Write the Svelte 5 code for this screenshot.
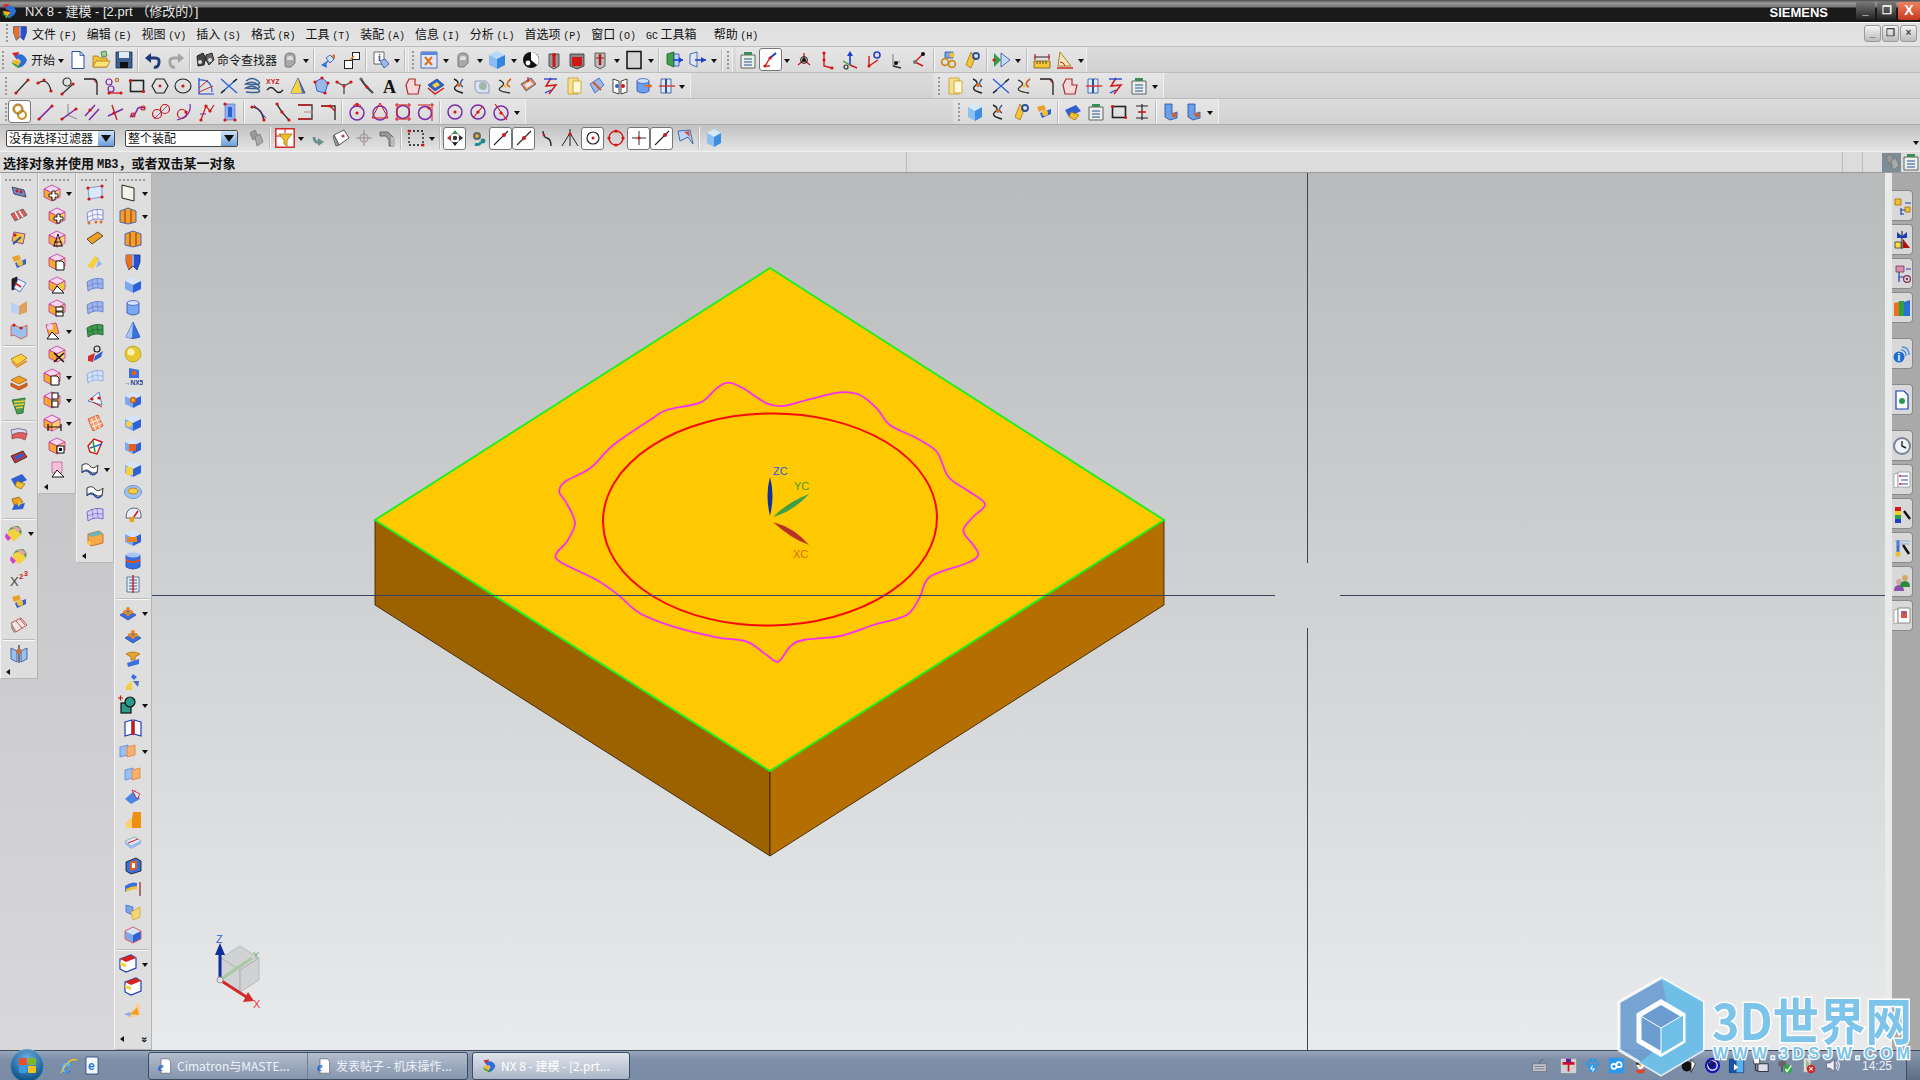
<script>
	const line = (d, s = "#333", w = 1.3) => `<path d="${d}" fill="none" stroke="${s}" stroke-width="${w}"/>`;
	const dot = (x, y, r = 1.6, c = "#d41414") => `<circle cx="${x}" cy="${y}" r="${r}" fill="${c}"/>`;
	const fill = (d, f, s = "none", w = 0.8) => `<path d="${d}" fill="${f}" stroke="${s}" stroke-width="${w}"/>`;
	const ring = (x, y, r, s = "#333", w = 1.2) => `<circle cx="${x}" cy="${y}" r="${r}" fill="none" stroke="${s}" stroke-width="${w}"/>`;
	const cube = (t, l, r, s = "none") =>
		fill("M10 2L18 6L10 10L2 6Z", t, s) + fill("M2 6L10 10V18L2 14Z", l, s) + fill("M18 6L10 10V18L18 14Z", r, s);
	const blue = () => cube("#d5e4fb", "#7ea8ee", "#2d62d8");
	const pink = (g = "") => cube("#f6d7f0", "#f5a92e", "#ffd070", "#c030a0") + g;
	const surf = (f, s) =>
		fill("M2 7Q9 2 18 4L18 14Q10 11 3 16Z", f, s) + line("M7 4.5L8 13M12 3.5L13 12M2.5 11Q10 7 18 9", s, 0.6);
	const cyl = (f, top) => fill("M4 5V15Q10 19 16 15V5Z", f, "#2a4fb0") + `<ellipse cx="10" cy="5" rx="6" ry="2.4" fill="${top}" stroke="#2a4fb0" stroke-width=".7"/>`;
	const purple = "#7a2aa8";
	const ghost = fill("M5 16V7Q5 3 10 3T15 7V13L11 17H6Z", "#a9a9a9", "#666") + fill("M7 7Q10 5 13 7V10H7Z", "#ddd");
	const tri = fill("M10 11L17 18H5Z", "#fff", "#111", 1);

	const ICONS = {
		nx: fill("M3 3L10 2L8 10Z", "#e02020") + fill("M5 6Q14 1 18 10Q16 17 8 18L12 11Z", "#2a6ed8") + fill("M3 10L12 11L7 18Z", "#f0b820") + fill("M2 12Q6 18 12 17", "#30a030"),
		new: fill("M4 1.5H12L16 5.5V18.5H4Z", "#fff", "#2a4fa0", 1) + fill("M12 1.5V5.5H16Z", "#cfe0f8", "#2a4fa0"),
		open: fill("M2 6H7L9 8H16V17H2Z", "#f0c040", "#a87a10") + fill("M5 11H19L16 17H2Z", "#ffe27a", "#a87a10") + fill("M10 2L15 1L16 6L11 7Z", "#9bd08a", "#487a40"),
		save: fill("M2 2H18V18H2Z", "#3c5f8f", "#1c3158") + fill("M5 2H15V8H5Z", "#dfe8f4") + fill("M6 12H14V18H6Z", "#111"),
		undo: line("M5 8H12Q17 8 16 13T11 17", "#1d3b78", 3) + fill("M8 3V13L2 8Z", "#1d3b78"),
		redo: line("M15 8H8Q3 8 4 13T9 17", "#a5a5a5", 3) + fill("M12 3V13L18 8Z", "#a5a5a5"),
		binoc: fill("M2 6L8 3L11 8L9 15L3 16Z", "#444", "#111") + fill("M11 5L17 3L19 10L14 15L11 10Z", "#666", "#111") + dot(5, 12, 2, "#ddd") + dot(15, 10, 2, "#ddd"),
		gshape: ghost,
		arrows: line("M5 15L15 5", "#2a6ed8", 1.5) + fill("M11 7L16 4V9Z", "#e07b20") + fill("M2 15L7 12L8 18Z", "#2a6ed8") + fill("M7 8L11 5L15 9L11 13Z", "#cfe0f8", "#2a4fa0"),
		boxes: `<rect x="2.5" y="10.5" width="8" height="8" fill="#fff" stroke="#222"/><rect x="10.5" y="2.5" width="7" height="7" fill="#fff" stroke="#222"/>` + line("M8 10L12 6", "#e07b20", 1.6),
		infoq: fill("M3 2H13V14H3Z", "#fff", "#444") + `<text x="7" y="11" font-size="10" font-family="Liberation Serif" font-weight="700" fill="#2a4fa0">i</text>` + fill("M9 11L14 9L18 14L13 18Z", "#9db8e8", "#2a4fa0"),
		winx: fill("M2 2H18V18H2Z", "#dfe8f8", "#2a4fa0") + line("M6 7L13 15M13 7L6 15", "#e07020", 2) + fill("M2 2H18V5H2Z", "#5a88dc"),
		cubeb: fill("M10 1L18 5L10 9L2 5Z", "#b7d8fa") + fill("M2 5L10 9V19L2 15Z", "#8cbdf2") + fill("M18 5L10 9V19L18 15Z", "#2f86e0"),
		ball: dot(10, 10, 8, "#111") + fill("M10 2A8 8 0 0 1 16 15L10 10Z", "#fff") + dot(7, 13, 2.4, "#fff"),
		cylr: fill("M5 4H15V16L10 19L5 16Z", "#999", "#333") + line("M10 4V17", "#d01818", 3) + dot(10, 5, 2, "#d01818"),
		cylr2: fill("M3 4H17V16L10 19L3 16Z", "#888", "#333") + fill("M5 7H15V16H5Z", "#d01818"),
		cylr3: fill("M5 3H15V16L10 19L5 16Z", "#bbb", "#444") + line("M10 4V15", "#b01818", 2.4) + line("M6 8H14", "#b01818", 1),
		panel: fill("M3 1.5H17V18.5H3Z", "#d4d4d4", "#111", 1.5),
		mir: fill("M3 4L10 2V17L3 14Z", "#3fa04a", "#1d5a28") + fill("M10 4H15V16H10Z", "#bcd4f8", "#2a4fa0") + line("M9 10H19", "#1d3fd0", 1.6) + fill("M15 7L19 10L15 13Z", "#1d3fd0"),
		mir2: fill("M3 4L10 2V17L3 14Z", "#dfe8f8", "#2a4fa0") + line("M8 10H19", "#1d3fd0", 1.6) + fill("M14 7L19 10L14 13Z", "#1d3fd0"),
		list: fill("M3 5H17V18H3Z", "#e8f0e8", "#444") + fill("M6 2H14V5H6Z", "#3b8a5a") + line("M6 9H14M6 12H14M6 15H14", "#2a4fa0", 1),
		wcs: line("M4 16L9 8", "#d01818", 1.4) + line("M9 8L15 3", "#1d3fd0", 2) + line("M4 16H9", "#d01818", 1.4) + dot(4, 16) + dot(9, 8),
		wcs2: line("M10 10V3M10 10L4 15M10 10L16 15", "#d01818", 1.3) + dot(10, 10, 2, "#111") + ring(10, 10, 3.4, "#111", 1),
		wcs3: line("M7 3V16L15 18", "#d01818", 1.4) + dot(7, 3) + dot(15, 18) + dot(7, 10),
		wcs4: line("M10 15V3", "#1d3fd0", 1.6) + fill("M7 6L10 1L13 6Z", "#1d3fd0") + line("M10 15L17 18", "#d01818", 1.4) + line("M10 15L3 11", "#3b9a3b", 1.4) + ring(6, 17, 2),
		wcs5: line("M6 6V16L15 10", "#d01818", 1.4) + ring(14, 5, 3, "#1d3fd0", 1.6) + dot(6, 16),
		wcs6: line("M7 4V16M7 16L14 11", "#999", 1.4) + line("M7 16L15 18", "#333", 1.4) + dot(10, 13, 2, "#111"),
		wcs7: line("M6 12L14 4M6 12L14 16", "#d01818", 1.4) + dot(14, 4, 2, "#111") + dot(6, 12, 2, "#777"),
		link: fill("M6 2H14V8H6Z", "#7aa6e8", "#2a4fa0") + ring(6, 12, 3.4, "#c89020", 1.8) + ring(13, 14, 3.4, "#c89020", 1.8) + dot(13, 5, 2.5, "#f0c030"),
		keyr: fill("M9 2L13 8L9 18L4 15L7 7Z", "#f2c53a", "#a87a10") + ring(14, 6, 3, "#2a4fa0", 1.8),
		play: fill("M2 3V17L9 10Z", "#2ea043") + fill("M9 3L18 10L9 17Z", "#c8daf8", "#2a4fa0") + dot(2, 10, 1.6),
		ruler: fill("M2 11H18V18H2Z", "#f2c53a", "#7a5a10") + line("M5 11V14M8 11V14M11 11V14M14 11V14", "#333", 0.8) + line("M2 7H18", "#222", 1) + line("M3 4V10M17 4V10", "#d01818", 1.2),
		angle: fill("M5 2L16 16H3Z", "#f4e6c0", "#b0801c", 1) + line("M2 18H18", "#d01818", 1.4) + line("M5 12Q9 12 10 16", "#d01818", 1),

		rline: line("M4 17L16 4", "#333") + dot(4, 17) + dot(16, 4),
		rarc: line("M3 7Q13 1 16 15", "#333") + dot(3, 7) + dot(9, 4) + dot(16, 15),
		rtan: ring(9, 6, 4) + line("M4 18L15 8", "#333") + dot(4, 18) + dot(15, 8),
		rfil: line("M3 3H12Q16 3 16 8V19", "#222") + line("M12 3L16 8", "#d01818", 1),
		rspl: ring(5, 6, 3, purple) + ring(7, 13, 3, purple) + ring(13, 4, 1.6, "#c07020") + line("M5 17H17", "#d01818") + dot(5, 17) + dot(17, 17),
		rrect: `<rect x="3.5" y="4.5" width="13" height="11" fill="none" stroke="#222" stroke-width="1.6"/>` + dot(3.5, 4.5) + dot(16.5, 15.5),
		rhex: fill("M6 3H14L18 10L14 17H6L2 10Z", "none", "#222", 1.2) + dot(10, 10, 1.4),
		rell: `<ellipse cx="10" cy="10" rx="8" ry="7" fill="none" stroke="#222" stroke-width="1.1"/>` + dot(10, 10),
		rbez: line("M3 2V18H18", "#1d3fd0", 1.2) + line("M3 4Q16 3 16 16", "#3060d0", 1.2) + line("M3 12L12 4M3 16L17 10", "#d01818", 0.9),
		rcross: line("M2 3L18 17M2 17L18 3", "#3060d0", 1.3) + line("M14 6L18 3M2 17L6 14", "#222", 1.3),
		rcoil: line("M4 5Q10 0 16 5T4 8Q10 4 16 9T4 12Q10 8 16 13T4 16", "#3a6090", 1.6),
		rxyz: `<text x="1" y="8" font-size="7" font-weight="700" font-family="Liberation Sans" fill="#d01818">XYZ</text>` + line("M2 14Q6 9 10 14T18 14", "#222", 1.3),
		rcone: fill("M10 2L17 17H3Z", "#4878d8", "#24408a") + fill("M10 2L14 17H3Z", "#f5d240"),
		rball: fill("M4 6L11 2L17 7L14 17L6 15Z", "#9ab8e8", "#3060d0", 1) + dot(4, 6) + dot(17, 7) + dot(14, 17) + dot(11, 2),
		rwye: line("M3 6Q10 12 17 6M10 10V18", "#555", 1.4) + dot(3, 6) + dot(17, 6) + dot(10, 10),
		rtrace: line("M4 3Q8 10 16 17", "#444", 2.2) + dot(4, 3, 1.6, "#666") + dot(10, 11),
		rA: `<text x="3" y="17" font-size="18" font-weight="700" font-family="Liberation Serif" fill="#111">A</text>`,
		rpatch: fill("M6 3H12V9H17L15 18H5L3 9Z", "#f6d8d8", "#a83030", 1.2),
		rflag: fill("M2 9L11 3L18 9L9 15Z", "#3060d0", "#24408a") + fill("M6 9L11 6L14 9L9 12Z", "#f6d040") + line("M2 12L9 18L18 12", "#d01818", 1.4),
		rsym: line("M5 3Q12 6 7 10T14 17", "#222", 1.4) + line("M14 3Q9 8 14 11", "#2a4fa0", 1.3) + dot(10, 9, 2, "#e07020"),
		rlens: fill("M3 5H14L17 9V17H6L3 13Z", "#d6e3f4", "#88a") + dot(11, 10, 4, "#9fb6a8"),
		rswirl: line("M4 4Q12 7 6 11T15 17", "#333", 1.3) + line("M16 3Q9 8 15 11", "#d06020", 1.6) + dot(10, 10, 1.6, "#f0c030"),
		rfold: fill("M3 8L13 2L18 8L8 15Z", "#e88a40", "#2a4fa0") + fill("M6 9L12 5L15 8L9 12Z", "#dce8fa") + line("M10 1V6", "#d01818", 1.2),
		rtwist: line("M10 2L5 10L15 9L8 18", "#d01818", 1.5) + line("M3 3H16", "#1d3fd0", 1.3) + line("M4 17L10 14", "#1d3fd0", 1.3),
		rdoc: fill("M4 2H14V18H4Z", "#f6e090", "#c89a20") + fill("M9 5H17V17H9Z", "#fff8d8", "#c89a20"),
		rribbon: fill("M3 8L12 2L17 9L8 17Z", "#9ab8e8", "#3060d0") + line("M6 6L14 14", "#d8541a", 1.8),
		rbook: fill("M3 3L9 5V18L3 16Z", "#fff", "#222") + fill("M17 3L11 5V18L17 16Z", "#fff", "#222") + dot(7, 10, 2, "#3060d0") + dot(13, 10, 2, "#d01818"),
		rpipe: cyl("#6ba0f0", "#cfe0fb") + line("M11 10H19", "#e07020", 1.6) + fill("M16 7L19 10L16 13Z", "#e07020"),
		rpipe2: fill("M5 3H15V17H5Z", "#dfeafc", "#2a4fa0") + line("M10 3V17", "#2a4fa0", 2) + line("M3 10H19", "#e03020", 1.4),

		pchain: ring(8, 7, 4, "#c89020", 2) + ring(12, 13, 4, "#c89020", 2) + ring(8, 7, 5.2, "#555", 0.5),
		pline: line("M3 17L16 4", purple, 1.7) + dot(3, 17) + dot(16, 4),
		paxes: line("M9 2V13L18 17M9 13L3 17", "#999", 1.2) + line("M3 17L17 7", purple, 1.5) + dot(3, 17) + dot(17, 7),
		ppar: line("M3 14L13 3M7 18L17 7", purple, 1.5) + dot(8, 8),
		pcross: line("M3 14L18 7", purple, 1.4) + line("M7 3L12 18", "#c02828", 1.4) + dot(9, 11),
		pcurve: line("M2 15Q8 12 9 8T17 6", purple, 1.5) + ring(5, 13, 2, "#d01818") + ring(15, 6, 2, "#d01818"),
		pcirc2: ring(6, 12, 4.5, "#d01818") + ring(14, 7, 4.5, "#d01818") + line("M3 17L17 3", purple, 0.8),
		pcirc3: ring(8, 12, 4.5, "#d01818") + line("M3 18Q18 14 16 2", purple, 1.2) + dot(12, 10),
		pblob: line("M4 18L9 4L13 9L17 3", "#d01818", 1.2) + dot(9, 4) + dot(13, 9) + dot(4, 18) + line("M3 12H9", purple, 1),
		pblk: fill("M5 2H15V18H5Z", "#8fb0ec", "#6a86c8") + fill("M8 5H12V15H8Z", "#3060d0") + dot(5, 2) + dot(15, 18) + dot(5, 18),
		rcor1: line("M3 5Q12 5 15 18", "#2a2a2a", 1.5) + line("M5 3L17 16", purple, 1) + dot(3, 5) + dot(15, 18),
		rcor2: line("M5 2Q9 10 17 18", "#333", 1.5) + dot(5, 2) + dot(17, 18) + dot(10, 10),
		rtrim: line("M3 3H17V17H3", "#333", 1.3) + line("M3 3H15", "#d01818", 1.4) + line("M3 17H15", "#d01818", 1.4) + line("M9 10H18", "#a88", 1),
		rtrim2: line("M3 4H17V18", "#333", 1.4) + line("M3 4H12L17 9", "#d01818", 1.4) + dot(12, 4),
		pc1: ring(10, 11, 7, purple, 1.5) + dot(10, 11) + dot(10, 3) + line("M6 4L10 1L14 4", "#d01818", 1),
		pc2: ring(10, 11, 7, purple, 1.3) + line("M10 1L2 16H18Z", "#d01818", 1),
		pc3: ring(10, 10, 6.5, purple, 1.5) + line("M2 3H18M2 17H18M4 1V19M16 1V19", "#d01818", 1),
		pc4: ring(9, 11, 6.5, purple, 1.5) + line("M2 3H18M16 1V19", "#d01818", 1) + dot(13, 6),
		pd1: ring(10, 10, 7, purple, 1.5) + dot(10, 10),
		pd2: ring(10, 10, 7, purple, 1.5) + line("M5 16L15 4", "#d01818", 1.1) + dot(10, 10),
		pd3: ring(10, 11, 7, purple, 1.5) + line("M4 2L16 18", "#d01818", 1.1) + dot(10, 11),

		gchain: fill("M4 5L9 2L12 8L7 12Z", "#999", "#777") + fill("M9 9L14 6L17 14L11 18Z", "#aaa", "#777"),
		filt: `<rect x=".8" y=".8" width="18.4" height="18.4" fill="#fff" stroke="#d01818" stroke-width="1.4"/>` + fill("M4 6H17L12 12V18L9 16V12Z", "#f0c020", "#a07010") + line("M10 1V5M1 8H6", "#d01818", 1),
		gteal: line("M6 9Q6 15 12 14", "#6b8f8f", 3) + fill("M10 10L16 14L10 18Z", "#6b8f8f"),
		gcube: fill("M3 7L13 2L18 10L8 17Z", "#fff", "#555", 1) + fill("M3 7L8 17L5 18L2 9Z", "#999", "#555") + dot(12, 8, 1.6, "#a44"),
		gcross: line("M10 2V18M2 10H18", "#a08888", 1.1) + ring(10, 10, 4, "#999", 1.2),
		gpipe: fill("M3 4H11L17 10V18H12V12L9 8H3Z", "#999", "#555") + fill("M14 9H18V18H14Z", "#bbb"),
		dash: `<rect x="3" y="3" width="14" height="14" fill="none" stroke="#111" stroke-width="1.3" stroke-dasharray="2 2"/>` + dot(3, 3, 1.5) + dot(17, 17, 1.5),
		snap1: dot(10, 10, 2.2, "#333") + fill("M10 2L13 6H7Z", "#2ea043") + fill("M10 18L7 14H13Z", "#111") + fill("M2 10L6 7V13Z", "#d01818") + fill("M18 10L14 13V7Z", "#111") + ring(10, 10, 5, "#666", 0.7),
		snap2: dot(9, 8, 4, "#666") + dot(9, 8, 1.8, "#f0c020") + line("M13 14Q11 18 7 16", "#1d8a8a", 2.6) + dot(15, 13, 2.4, "#1d8a8a"),
		sline: line("M3 17L17 3", "#222", 1.1) + dot(13, 7, 2, "#d01818"),
		smid: line("M3 17L17 3", "#222", 1.1) + dot(10, 10, 2, "#d01818"),
		scurve: line("M6 3Q6 9 10 10T14 18", "#222", 1.3) + dot(7, 7, 1.3),
		sinter: line("M2 18L10 5L18 18M10 1V18", "#222", 1) + dot(10, 6),
		scenter: ring(10, 10, 6, "#222", 1.2) + dot(10, 10, 1.5),
		squad: ring(10, 10, 7, "#d02020", 1.4) + dot(10, 3) + dot(10, 17) + dot(3, 10) + dot(17, 10),
		spole: line("M10 3V17M3 10H17", "#333", 1) + dot(10, 10, 1.6),
		sonc: fill("M3 3L15 2L18 16L13 9L5 13Z", "#bdd4f6", "#2a4fa0") + fill("M9 4L14 3L15 9Z", "#d05050"),
		sbox: fill("M10 1L17 5L10 9L3 5Z", "#d5e8fb") + fill("M3 5L10 9V19L3 15Z", "#8cc0f2") + fill("M17 5L10 9V19L17 15Z", "#3c8ee0"),

		body1: fill("M3 4L15 7L17 14L5 11Z", "#6d8cd0", "#333") + dot(8, 8, 1.4) + dot(12, 9, 1.4),
		sf1: fill("M2 8L14 3L18 9L6 15Z", "#e05a5a", "#555") + line("M6 6L10 13M10 5L14 11", "#fff", 1.5),
		sf2: fill("M2 8L14 3L18 9L6 15Z", "#d03030", "#222") + fill("M5 9L13 5L15 8L7 12Z", "#3060d0"),
		sf3: fill("M5 3L16 5L14 15L3 12Z", "#f2c53a", "#7a2aa8") + line("M4 15L12 8", "#2a4fa0", 1.8) + dot(6, 6, 1.6),
		sf5: fill("M3 4L8 2V13L3 15Z", "#222", "#111") + fill("M9 4L17 8L11 17L5 13Z", "#f0f4ff", "#3060d0") + line("M6 8L12 12", "#d01818", 1.6),
		sf6: fill("M2 4L10 8L18 3V14L10 17L2 14Z", "#b9d3f4") + fill("M10 8L18 3V14L10 17Z", "#e0a05c"),
		sf7: fill("M2 5L5 4L12 7L18 4V15L12 18L5 14L2 15Z", "#9ac0f0", "#d05030", 0.8) + dot(5, 4) + dot(12, 7),
		hot1: fill("M2 9L12 4L18 8L8 15Z", "#ffd040", "#a87010") + fill("M2 12L8 18L18 12L17 10L8 16L3 11Z", "#e89020"),
		hot2: fill("M2 7L10 3L18 7L10 11Z", "#f2a020", "#a06010") + fill("M2 10L10 14L18 10L18 13L10 17L2 13Z", "#e86010", "#a04010"),
		stack: fill("M3 4L16 2L14 17L8 18Z", "#4a9a50", "#226a2a") + line("M5 6L16 5M5 9L15 8M7 12L14 11", "#f0d040", 1.5),
		wave1: fill("M2 5Q9 2 17 5L18 9Q10 6 3 10Z", "#d8d8e8", "#6060a0") + fill("M3 10Q10 6 18 9L16 15Q9 11 3 14Z", "#e06060", "#a04040"),
		key: fill("M2 8L13 3L18 9L6 15Z", "#3060d0") + fill("M8 10L16 13L12 18L6 15Z", "#f0c030", "#a07010"),
		bridge: fill("M3 5L10 3L14 8L5 11Z", "#f0a020", "#a06010") + fill("M5 11L16 9L14 15L3 16Z", "#3060d0") + fill("M9 7L13 9L9 13Z", "#f0c030"),
		rainb: fill("M4 9Q6 2 14 3Q19 6 17 12L10 10Z", "#4ea050") + fill("M4 9Q7 5 13 6L17 12L11 18Q6 17 4 13Z", "#f2d240") + fill("M2 10L7 15L4 18L1 14Z", "#d040d0") + fill("M8 4Q13 2 17 7L13 9Z", "#e8a0b0"),
		xsq: `<text x="1" y="17" font-size="13" font-family="Liberation Sans" fill="#444">X</text><text x="10" y="10" font-size="8" font-weight="700" font-family="Liberation Sans" fill="#d01818">2</text><text x="15" y="7" font-size="7" font-weight="700" font-family="Liberation Sans" fill="#d01818">3</text>`,
		hands: fill("M3 5L10 3L12 7L5 10Z", "#e8a030") + fill("M6 11L17 7L17 12L8 16Z", "#3060d0") + dot(11, 11, 3, "#f0c030"),
		sht: fill("M2 8L12 3L18 10L7 17Z", "#f2e6e6", "#b03030") + line("M7 6L13 13M11 4L16 10", "#b03030", 0.8) + fill("M2 9L7 17L5 18L2 13Z", "#999"),
		pad: fill("M2 4L8 7V18L2 15Z", "#9ac0f0", "#2a4fa0") + fill("M18 4L12 7V18L18 15Z", "#9ac0f0", "#2a4fa0") + line("M10 1V19", "#777", 2) + fill("M8 5H12V10H8Z", "#e07020"),

		pkplus: pink(`<path d="M10 8H13V11H16V14H13V17H10V14H7V11H10Z" fill="#fff" stroke="#111" stroke-width=".9"/>`),
		pkcone: pink(line("M11 5L15 17M11 5L7 17M6 17H16M7 13H15", "#111", 0.9)),
		pkdoc: pink(fill("M9 9H15L17 11V18H9Z", "#fff", "#111", 1)),
		pktri: cube("#ffd8f0", "#f2b030", "#f5c93a", "#c030a0") + tri,
		pkstack: pink(`<rect x="9" y="9" width="7" height="4" fill="#fff" stroke="#111"/><rect x="9" y="14" width="7" height="4" fill="#fff" stroke="#111"/>`),
		pkround: fill("M4 4L14 2L17 12L7 15Z", "#f5a92e", "#c030a0") + dot(8, 6, 3, "#e8d0f0") + tri,
		pkx: pink(line("M7 9L17 18M17 9L7 18", "#111", 1.5)),
		pksplit: pink(`<rect x="10" y="3" width="6" height="6" fill="#fff" stroke="#111"/><rect x="10" y="11" width="6" height="6" fill="#fff" stroke="#111"/>`),
		pkdim: pink(line("M6 14H19M6 11V18M19 11V18", "#111", 1.2)),
		pksq: pink(`<rect x="10" y="10" width="7" height="7" fill="#fff" stroke="#111"/><rect x="12" y="12" width="3" height="3" fill="#111"/>`),
		pkfade: fill("M5 3H15V14H5Z", "#f6c0d8", "#c060a0") + tri,

		s1: fill("M3 5L17 3V14L4 16Z", "#dbe8fa", "#6a86c8") + dot(3, 5) + dot(17, 3) + dot(17, 14) + dot(4, 16),
		s2: surf("#f4f4ff", "#7070c0") + dot(4, 17, 1.5, "#e07020") + dot(11, 16, 1.5, "#e07020") + dot(16, 16, 1.5, "#e07020"),
		s3: fill("M2 10L13 3L18 7L7 15Z", "#f0a020", "#333"),
		s4: fill("M2 14L10 4L14 7L8 17Z", "#f5d040") + fill("M10 4L17 12L11 16L14 7Z", "#8cb8ef"),
		s5: surf("#9cb4ee", "#6076c8"),
		s6: surf("#3f9a50", "#1d5a28"),
		s7: ring(12, 5, 3, "#222") + fill("M3 12L10 9L8 18L3 17Z", "#d03030") + fill("M10 12L18 7L16 13L9 17Z", "#3060d0"),
		s8: surf("#cfe0fa", "#8aa2d8"),
		s9: fill("M3 11L14 2L17 15Z", "#eef3fc", "#4060b0") + dot(14, 8) + dot(7, 9) + line("M8 12L17 17", "#d01818", 1),
		s10: fill("M3 6L13 2L18 13L8 18Z", "#f4a070", "#d04a20") + line("M6 5L11 17M10 3L15 15M5 10L16 6M7 14L17 10", "#fff", 0.8),
		s11: fill("M3 10L9 3L17 6L12 18L5 16Z", "#f6fff6", "#d01818", 1.4) + line("M5 12L17 8", "#3060d0", 1.6) + line("M8 5L10 16", "#2ea043", 1.6),
		s12: fill("M2 6Q7 3 10 7T18 6L17 14Q12 15 9 12T2 14Z", "#fff", "#333", 1) + line("M2 13Q7 10 10 14T17 13", "#2a4fa0", 1.6),
		s13: surf("#cfcff8", "#7050c0"),
		s14: fill("M3 6L14 3L18 6V15L6 18L3 15Z", "#f6a94a", "#c06020") + fill("M3 6L14 3L18 6L6 9Z", "#6ab4b4") + dot(4, 15, 2, "#f0d040"),

		cubebox: blue(),
		sheet: fill("M4 2L16 5V18L4 15Z", "#eef4e8", "#222", 1),
		frame: fill("M2 5L10 2L18 5V16L10 18L2 16Z", "#f0a030", "#2a4fb0") + line("M7 4V17M13 4V17", "#a04010", 1.2),
		frontb: fill("M3 3H17V10L14 18L10 14L6 18L3 10Z", "#2a4fd0", "#14307a") + fill("M3 3H9V14L6 18L3 10Z", "#e87020") + line("M10 3V14", "#fff", 1),
		cyl: cyl("#7ba8f0", "#d6e4fb"),
		cone: fill("M10 1L17 16Q10 19 3 16Z", "#3a6fe0", "#2a4fa0") + fill("M10 1L9 17Q5 17 3 16Z", "#a8c6f8"),
		sph: dot(10, 10, 8, "#e8c830") + dot(8, 8, 3.5, "#fbf0b0") + ring(10, 10, 8, "#a89020", 0.6),
		hole: fill("M6 1L16 3V11L6 11Z", "#3a6fe0") + dot(11, 6, 2.4, "#e06020") + `<text x="1" y="18" font-size="6.5" font-weight="700" font-family="Liberation Sans" fill="#2a3f90">→NX5</text>`,
		holb: blue() + dot(10, 10, 3.2, "#e06020") + dot(10, 10, 1.4, "#fbd040"),
		boss: blue() + dot(6, 11, 3, "#ffd040"),
		pock: blue() + fill("M6 8H13V15H6Z", "#e8601c"),
		pad2: blue() + fill("M3 8H10V16H3Z", "#f5d040"),
		slot: `<ellipse cx="10" cy="10" rx="8.5" ry="6.5" fill="#9cc4f4" stroke="#6a96d8"/><ellipse cx="10" cy="9" rx="5" ry="3" fill="#f0d040" stroke="#d08020"/>`,
		gauge: fill("M3 13Q3 3 11 3T18 13Z", "#e8eef8", "#445") + line("M10 13L15 6", "#d01818", 1.6) + fill("M6 13L11 11L11 17L7 17Z", "#f0a020"),
		plate: blue() + fill("M4 9H14V14H4Z", "#f08020"),
		drum: fill("M3 4V16Q10 20 17 16V4Z", "#3a6fe0", "#2a4fa0") + `<ellipse cx="10" cy="4" rx="7" ry="2.6" fill="#a8c6f8"/>` + fill("M3 8Q10 12 17 8V10Q10 14 3 10Z", "#e85010"),
		spring: fill("M4 3H16V18H4Z", "#e8eef8", "#3a5a90") + line("M6 6H14M6 9H14M6 12H14M6 15H14", "#3a5a90", 1) + line("M10 1V19", "#d01818", 1.4),
		cluster: fill("M2 12L10 7L18 12L10 17Z", "#3a6fe0", "#2a4fa0") + dot(7, 9, 2, "#e88a20") + dot(10, 6, 2, "#e88a20") + dot(13, 9, 2, "#e88a20") + dot(10, 11, 2, "#e88a20"),
		plume: fill("M3 5Q10 1 17 5L12 8V11H8V8Z", "#e8a030", "#b07010") + fill("M4 14L16 10V15L5 18Z", "#3a6fe0"),
		chain: fill("M10 2L14 5L11 8L8 5Z", "#3a6fe0") + fill("M3 14L9 9V18H3Z", "#f0d040") + fill("M10 9L16 9L15 15Z", "#4470c0"),
		bool: `<rect x="3" y="8" width="10" height="10" fill="#2a9a8a" stroke="#111" stroke-width="1.2"/><circle cx="12" cy="7" r="5" fill="#2a9a8a" stroke="#111" stroke-width="1.2"/>` + line("M0 3H5M2.5 .5V5.5", "#d01818", 1.2),
		books: fill("M2 4L9 2V16L2 18Z", "#fff", "#1d3fb0", 1.2) + fill("M18 4L11 2V16L18 18Z", "#fff", "#1d3fb0", 1.2) + line("M10 3V17", "#d01818", 3),
		mix: fill("M2 6L10 4V14L2 16Z", "#9ac0f0", "#5a88dc") + fill("M9 6L17 4V14L9 16Z", "#f6b070", "#e08040"),
		chfr: fill("M2 12L12 3L17 12L8 17Z", "#4a88e8") + fill("M9 3L17 7L14 12Z", "#d8e6fb", "#d01818"),
		offs: fill("M3 15Q4 10 9 9L10 2H18V18H3Z", "#f09010") + fill("M3 15Q4 10 9 9V18H3Z", "#ffd070"),
		sl2: fill("M2 8L12 4L18 8L8 13Z", "#dfe8fb", "#8aa") + line("M5 10L15 6", "#d01818", 1) + fill("M2 8V11L8 16L18 11V8L8 13Z", "#9ab8e8"),
		bb2: fill("M3 6L13 2L18 5V15L8 18L3 15Z", "#3a6fe0", "#111") + fill("M7 6L14 4V13L7 15Z", "#e86010") + fill("M9 7H12V12H9Z", "#fff"),
		cap: fill("M2 7Q8 2 14 4V9Q8 8 2 13Z", "#3a6fe0") + fill("M3 10Q8 7 14 7V10Q8 10 3 13Z", "#f0c030") + line("M17 3V17", "#a01818", 1.2),
		mash: fill("M3 3L10 5V13L3 10Z", "#7aa6e8", "#3a6fe0") + fill("M8 10L17 5V15L10 18Z", "#f0d878", "#e0a030"),
		dashb: blue() + fill("M2 6L10 2L18 6V14L10 18L2 14Z", "none", "#e06060", 1),
		drawer: fill("M2 5L13 1L18 4V14L8 18L2 15Z", "#fff", "#1d3fb0", 1.2) + fill("M2 5L13 1L18 4L8 8Z", "#d82020") + fill("M2 8L8 10V13L2 11Z", "#f5d040"),
		moon: fill("M2 15Q9 14 14 3L17 5V15L9 18Z", "#fad0a0") + fill("M6 14Q12 11 14 7L16 15Z", "#f0a020") + fill("M1 14L7 12L8 17Z", "#8cb0e8"),

		t1: fill("M3 3H9V9H3Z", "#f0c030", "#a07010") + fill("M13 11H18V16H13Z", "#f0c030", "#a07010") + line("M9 12V19M9 14H13M9 18H12M13 7H19", "#1d3fb0", 1.2),
		t2: line("M10 1V19", "#111", 1) + fill("M5 2L10 6L15 2V8H5Z", "#1d3fb0") + fill("M3 12H9V18H3Z", "#f5e040", "#333") + fill("M11 9L18 18H11Z", "#b01010"),
		t3: fill("M4 2H12V8H4Z", "#d890b0", "#803060") + line("M7 8V18M7 13H12M14 5H19", "#1d3fb0", 1.2) + ring(15, 15, 3.4, "#803060") + dot(15, 15, 1.2, "#803060"),
		t4: fill("M2 5L7 4V18H2Z", "#e87020") + fill("M7 3L12 3V18H7Z", "#2ea043") + fill("M12 4L18 2V18H12Z", "#2a6ed8"),
		t5: dot(7, 13, 5.5, "#1d6ed8") + `<text x="5.4" y="17" font-size="10" font-weight="700" font-family="Liberation Sans" fill="#fff">i</text>` + line("M9 6Q14 6 14 12M10 3Q17 3 17 11", "#4a90e0", 1.4),
		t6: fill("M4 1H12L16 5V19H4Z", "#fff", "#1d3fb0", 1.2) + dot(10, 11, 3, "#2a9a50"),
		t7: dot(10, 10, 9, "#7a8494") + dot(10, 10, 7, "#f0f4fa") + line("M10 5V10L14 12", "#222", 1.4),
		t8: fill("M2 4L6 3V17L2 18Z", "#fff", "#999") + fill("M6 2H18V17H6Z", "#fff", "#999") + line("M9 6H16M9 10H16M9 14H16", "#2a4fa0", 1.2) + dot(8, 6, 1) + dot(8, 14, 1),
		t9: fill("M3 3H9V7H3Z", "#d01818") + fill("M3 7H9V11H3Z", "#f0d020") + fill("M3 11H9V15H3Z", "#2ea043") + fill("M3 15H9V19H3Z", "#1d3fd0") + line("M12 7L18 15", "#111", 2.4),
		t10: line("M6 2V15", "#3a6fd0", 3) + line("M3 3H18M4 6H17", "#8aa8e0", 0.9) + line("M11 7L17 16", "#111", 2.4) + dot(6, 16, 2.6, "#e8c030"),
		t11: dot(7, 10, 3, "#d0a8a0") + fill("M2 19Q2 13 7 13T12 19Z", "#8a50b0") + dot(13, 6, 3, "#d8a868") + fill("M8 15Q8 9 13 9T18 15Z", "#2e8a40"),
		t12: fill("M2 4L6 3V17L2 18Z", "#fff", "#999") + fill("M6 2H18V17H6Z", "#fff", "#777") + fill("M9 5H15V12H9Z", "#e05050") + fill("M11 5H13V8H11Z", "#3a6fd0"),
		ie: `<text x="2" y="17" font-size="23" font-weight="700" font-style="italic" font-family="Liberation Serif" fill="#5cc0ff" stroke="#1d6ed8" stroke-width=".4">e</text>` + line("M2 17Q10 1 18 4", "#f2c420", 1.4),
		ie2: fill("M4 1H16V18H4Z", "#f4f6fb", "#1d3f80") + `<text x="6" y="14" font-size="12" font-weight="700" font-family="Liberation Sans" fill="#2a78d8">e</text>`,
		ied: fill("M5 1H14L17 4V19H5Z", "#fff", "#555") + `<text x="1" y="16" font-size="16" font-style="italic" font-weight="700" font-family="Liberation Serif" fill="#1d6ed8">e</text>`,
		kb: fill("M2 8H18V17H2Z", "#c4ccd6", "#666") + line("M4 11H16M4 14H16", "#666", 1) + line("M10 8Q10 3 15 3", "#666", 1),
		t_red: fill("M1 2H19V19H1Z", "#d0d0d0") + fill("M3 6H17V9H11V17H9V9H3Z", "#d80820") + fill("M7 2H13V7H7Z", "#70208a"),
		t_paw: dot(10, 13, 5, "#2a98ee") + dot(4, 8, 2.2, "#2a98ee") + dot(8, 4, 2.2, "#2a98ee") + dot(13, 4, 2.2, "#2a98ee") + dot(16, 8, 2.2, "#2a98ee") + line("M10 10L8 14H12L10 17", "#fff", 1.2),
		t_cloud: fill("M1 1H19V19H1Z", "#2a98ee") + ring(7, 11, 3, "#fff", 2) + ring(13, 9, 3, "#fff", 2),
		t_qq: dot(10, 8, 5, "#222") + fill("M5 9Q10 20 15 9Z", "#fff") + fill("M4 15H16L13 19H7Z", "#e84020") + dot(10, 10, 1.4, "#f0a020"),
		t_qq2: dot(10, 8, 5, "#2e7a9a") + fill("M5 9Q10 20 15 9Z", "#dff") + fill("M4 15H16L13 19H7Z", "#7a9a4a"),
		t_apple: dot(8, 11, 6, "#111") + fill("M13 3L18 8L13 18Z", "#fff", "#111"),
		t_knot: dot(10, 10, 9, "#1a1ab0") + ring(10, 10, 5.5, "#fff", 1.4) + ring(8, 8, 3, "#111", 1.2),
		t_box: fill("M1 2H19V19H1Z", "#1d4f9a") + fill("M10 3H18V18H10Z", "#5ab0e8") + fill("M7 8L12 12L7 16Z", "#fff"),
		t_net: `<rect x="7" y="8" width="12" height="9" fill="#dde" stroke="#222"/>` + fill("M2 2H9V8H2Z", "#fff", "#222") + line("M4 8V16H7", "#222", 1),
		t_plug: fill("M3 5H12V11H3Z", "#666") + line("M7 1V5M7 11V18", "#555", 2) + dot(14, 14, 5, "#2eaa3a") + line("M11 14L13 17L18 10", "#fff", 1.6),
		t_stop: fill("M4 1H13V18H4Z", "#ddd", "#888") + fill("M7 3L11 7V14H7Z", "#90c090") + dot(13, 14, 5, "#d82020") + line("M11 12L15 16M15 12L11 16", "#fff", 1.2),
		t_vol: fill("M3 7H7L12 3V17L7 13H3Z", "#eef", "#556") + line("M14 6Q17 10 14 14M16 4Q20 10 16 16", "#eef", 1.2),
		pipeh: line("M10 2V18M4 4H16M4 16H16", "#222", 1.2) + line("M6 10H14", "#d01818", 1.6),
		t_cloud2: fill("M4 2H11V12L16 10V16L9 18L4 15Z", "#6ba0e8", "#2a4fa0") + dot(13, 13, 2.4, "#d06030"),
	};

	const split = (s) => s.split(" ");
	const row1 = [
		split(": nx #开始 v new open save | undo redo | binoc #命令查找器 gshape v | arrows boxes | infoq v |"),
		split(": winx v gshape v cubeb v ball cylr cylr2 cylr3 v panel v | mir mir2 v | :"),
		split("list *wcs v wcs2 wcs3 wcs4 wcs5 wcs6 wcs7 | link keyr | play v | ruler angle v"),
	];
	const row2 = [
		split(": rline rarc rtan rfil rspl rrect rhex rell rbez rcross rcoil rxyz rcone rball rwye rtrace rA rpatch rflag rsym rlens rswirl rfold rtwist rdoc rribbon rbook rpipe rpipe2 v"),
		split(": rdoc rsym rcross rswirl rfil rpatch rpipe2 rtwist list v"),
	];
	const row3 = [
		split(": *pchain pline paxes ppar pcross pcurve pcirc2 pcirc3 pblob pblk | rcor1 rcor2 rtrim rtrim2 | pc1 pc2 pc3 pc4 | pd1 pd2 pd3 v"),
		split(": sbox rsym keyr hands | key list rrect pipeh | t_cloud2 t_cloud2 v"),
	];
	const row4 = split("gchain | filt v gteal gcube gcross gpipe | dash v | *snap1 snap2 *sline *smid scurve sinter *scenter squad *spole *sline sonc | sbox");

	const menus = [
		["文件", "F"], ["编辑", "E"], ["视图", "V"], ["插入", "S"], ["格式", "R"], ["工具", "T"], ["装配", "A"],
		["信息", "I"], ["分析", "L"], ["首选项", "P"], ["窗口", "O"],
	];

	const columns = [
		{ cls: "c1", items: split("body1 sf1 sf3 hands sf5 sf6 sf7 - hot1 hot2 stack - wave1 sf2 key bridge - rainb^ rainb xsq hands sht - pad <") },
		{ cls: "c2", items: split("pkplus^ pkplus pkcone pkdoc pktri pkstack pkround^ pkx pkdoc^ pksplit^ pkdim^ pksq pkfade <") },
		{ cls: "c3", items: split("s1 s2 s3 s4 s5 s5 s6 s7 s8 s9 s10 s11 s12^ s12 s13 s14 <") },
		{ cls: "c4", items: split("sheet^ frame^ frame frontb cubebox cyl cone sph hole holb boss pock pad2 slot gauge plate drum spring - cluster^ cluster plume chain bool^ books mix^ mix chfr offs sl2 bb2 cap mash dashb - drawer^ drawer moon") },
	];

	const rails = [["t1", "t2", "t3", "t4"], ["t5"], ["t6"], ["t7", "t8", "t9", "t10", "t11", "t12"]];
	const tray = split("kb t_red t_paw t_cloud t_qq t_qq2 t_apple t_knot t_box t_net t_plug t_stop t_vol");

	// magenta outline traced off the part, in the coordinates of a 3x crop at (540,360)
	const outline = [
		[565, 68], [610, 85], [680, 130], [730, 138], [800, 120], [900, 97], [960, 105], [1010, 145], [1050, 195], [1130, 235],
		[1190, 275], [1225, 350], [1280, 390], [1335, 432], [1300, 470], [1270, 512], [1300, 555], [1315, 585], [1280, 610], [1170, 650],
		[1140, 710], [1100, 765], [1000, 795], [900, 828], [790, 840], [750, 860], [715, 905], [680, 885], [620, 845], [530, 832],
		[400, 800], [300, 760], [235, 705], [170, 660], [60, 605], [50, 580], [80, 545], [105, 490], [80, 430], [58, 395],
		[75, 365], [150, 325], [220, 255], [330, 180], [380, 150], [480, 128], [530, 85],
	].map(([x, y]) => [540 + x / 3, 360 + y / 3]);

	function smooth(pts) {
		const n = pts.length;
		let d = `M${pts[0][0]} ${pts[0][1]}`;
		for (let i = 0; i < n; i++) {
			const [p0, p1, p2, p3] = [pts[(i - 1 + n) % n], pts[i], pts[(i + 1) % n], pts[(i + 2) % n]];
			const c1 = [p1[0] + (p2[0] - p0[0]) / 6, p1[1] + (p2[1] - p0[1]) / 6];
			const c2 = [p2[0] - (p3[0] - p1[0]) / 6, p2[1] - (p3[1] - p1[1]) / 6];
			d += `C${c1[0].toFixed(1)} ${c1[1].toFixed(1)} ${c2[0].toFixed(1)} ${c2[1].toFixed(1)} ${p2[0].toFixed(1)} ${p2[1].toFixed(1)}`;
		}
		return d + "Z";
	}
	const outlinePath = smooth(outline);
</script>

{#snippet icon(name)}
	<svg class="ico" viewBox="0 0 20 20" width="20" height="20">{@html ICONS[name] ?? ""}</svg>
{/snippet}

{#snippet tool(token)}
	{#if token === "|"}
		<i class="sep"></i>
	{:else if token === ":"}
		<i class="grip"></i>
	{:else if token === "v"}
		<i class="caret"></i>
	{:else if token[0] === "#"}
		<span class="tbtext">{token.slice(1)}</span>
	{:else if token[0] === "*"}
		<span class="slot on">{@render icon(token.slice(1))}</span>
	{:else}
		<span class="slot">{@render icon(token)}</span>
	{/if}
{/snippet}

<div class="app">
	<header class="titlebar">
		<div class="title-left">
			<svg viewBox="0 0 20 20" width="18" height="18">{@html ICONS.nx}</svg>
			<span>NX 8 - 建模 - [2.prt （修改的）]</span>
		</div>
		<div class="title-right">
			<span class="siemens">SIEMENS</span>
			<span class="winbtn">_</span>
			<span class="winbtn">❐</span>
			<span class="winbtn close">X</span>
		</div>
	</header>

	<nav class="menubar">
		<i class="grip"></i>
		<svg class="menu-logo" viewBox="0 0 20 20" width="18" height="18">{@html ICONS.frontb}</svg>
		{#each menus as [label, key]}
			<span class="menu">{label} <em>({key})</em></span>
		{/each}
		<span class="menu gc"><em>GC</em> 工具箱</span>
		<span class="menu">帮助 <em>(H)</em></span>
		<div class="docbtns">
			<span>_</span><span>❐</span><span>×</span>
		</div>
	</nav>

	<div class="bar">
		{#each row1 as group, i}
			<div class="toolbar joined g{i}">
				{#each group as t}{@render tool(t)}{/each}
			</div>
		{/each}
	</div>
	<div class="bar">
		<div class="toolbar">{#each row2[0] as t}{@render tool(t)}{/each}</div>
		<div class="toolbar r2b">{#each row2[1] as t}{@render tool(t)}{/each}</div>
	</div>
	<div class="bar">
		<div class="toolbar r3a">{#each row3[0] as t}{@render tool(t)}{/each}</div>
		<div class="toolbar r3b">{#each row3[1] as t}{@render tool(t)}{/each}</div>
	</div>

	<div class="selbar">
		<div class="combo c-a"><span>没有选择过滤器</span><b></b></div>
		<div class="combo c-b"><span>整个装配</span><b></b></div>
		{#each row4 as t}{@render tool(t)}{/each}
		<i class="caret end"></i>
	</div>

	<div class="status">
		<strong>选择对象并使用 <span class="mono">MB3</span>，或者双击某一对象</strong>
		<i class="st-div"></i>
		<div class="status-right">
			<i></i><i></i>
			<span class="st-ico dark">{@render icon("gchain")}</span>
			<span class="st-ico">{@render icon("list")}</span>
		</div>
	</div>

	<main class="body">
		<aside class="left">
			{#each columns as col}
				<div class="col {col.cls}">
					<i class="vgrip"></i>
					{#each col.items as it}
						{#if it === "-"}
							<i class="hsep"></i>
						{:else if it === "<"}
							<i class="foot"><u></u></i>
						{:else if it.endsWith("^")}
							<span class="cell drop">{@render icon(it.slice(0, -1))}<i class="caret"></i></span>
						{:else}
							<span class="cell">{@render icon(it)}</span>
						{/if}
					{/each}
					{#if col.cls === "c4"}
						<div class="foot bottom"><u></u><span>»</span></div>
					{/if}
				</div>
			{/each}
		</aside>

		<section class="view">
			<svg class="scene" viewBox="152 173 1733 877" width="1733" height="877">
				<path d="M375 520L770 771V856L375 605Z" fill="#9c6200" stroke="#2b1b00" stroke-width=".8" />
				<path d="M1164 520L770 771V856L1164 605Z" fill="#b56f00" stroke="#2b1b00" stroke-width=".8" />
				<path d="M770 268L1164 520L770 771L375 520Z" fill="#fec900" stroke="#1ef01e" stroke-width="2" />
				<ellipse cx="770" cy="519.5" rx="167" ry="106" fill="none" stroke="#f80a0a" stroke-width="2" transform="rotate(-1 770 519.5)" />
				<path d={outlinePath} fill="none" stroke="#fb2cfb" stroke-width="1.8" />

				<path d="M770 477Q765 495 770 516Q775 495 770 477Z" fill="#10309a" />
				<path d="M773 517Q792 512 809 494Q788 502 773 517Z" fill="#3f9f46" />
				<path d="M773 522Q790 538 809 545Q795 528 773 522Z" fill="#b8322a" />
				<text x="773" y="475" class="axis" fill="#1f5ce0">ZC</text>
				<text x="794" y="490" class="axis" fill="#4f9a20">YC</text>
				<text x="793" y="558" class="axis" fill="#e06a10">XC</text>

				<path d="M152 595.5H1275M1340 595.5H1885M1307.5 173V563M1307.5 628V1050" stroke="#3a4262" stroke-width="1" fill="none" />

				<g fill="#c4c8c8" fill-opacity=".65" stroke="#b0b4b4" stroke-width=".8">
					<path d="M240 946L259 958L240 970L221 958Z" />
					<path d="M221 958L240 970V992L221 980Z" />
					<path d="M259 958L240 970V992L259 980Z" />
				</g>
				<path d="M220 980L252 958" stroke="#a9c9a5" stroke-width="3" />
				<path d="M220 980V953" stroke="#0c2f9c" stroke-width="3" />
				<path d="M215 955L220 943L225 955Z" fill="#0c2f9c" />
				<path d="M220 980L248 998" stroke="#d42a2a" stroke-width="3" />
				<path d="M243 1002L254 1001L248 992Z" fill="#d42a2a" />
				<circle cx="220" cy="980" r="3" fill="#e4e4e4" stroke="#999" />
				<text x="216" y="943" class="axis" fill="#3a63d0">Z</text>
				<text x="253" y="958" class="axis small" fill="#6aaa60">Y</text>
				<text x="253" y="1008" class="axis" fill="#e04040">X</text>
			</svg>
		</section>

		<aside class="rail">
			{#each rails as group}
				<div class="railgroup">
					{#each group as r}
						<span class="tab">{@render icon(r)}</span>
					{/each}
				</div>
			{/each}
		</aside>
	</main>

	<footer class="taskbar">
		<span class="orb"><i class="r"></i><i class="g"></i><i class="b"></i><i class="y"></i></span>
		<span class="quick">{@render icon("ie")}</span>
		<span class="quick">{@render icon("ie2")}</span>
		<div class="taskgroup">
			<span class="task">{@render icon("ied")}Cimatron与MASTE...</span>
			<span class="task">{@render icon("ied")}发表帖子 - 机床操作...</span>
		</div>
		<span class="task active">{@render icon("nx")}NX 8 - 建模 - [2.prt...</span>
		<div class="tray">
			{#each tray as t}
				<span class="tray-ico">{@render icon(t)}</span>
			{/each}
			<span class="clock">14:25</span>
			<span class="showdesk"></span>
		</div>
	</footer>

	<svg class="watermark" viewBox="1600 960 320 120" width="320" height="120">
		<path d="M1661 978L1703 1002V1050L1661 1075L1619 1050V1002Z" fill="#6d9dd0" fill-opacity=".92" stroke="#fff" stroke-opacity=".85" stroke-width="3" />
		<path d="M1661 978L1703 1002V1050L1661 1075L1639 1062Q1680 1040 1661 978Z" fill="#6fc0e8" fill-opacity=".95" />
		<path d="M1661 1002L1683 1015V1041L1661 1054L1639 1041V1015Z" fill="#6d9dd0" stroke="#fff" stroke-width="5" />
		<path d="M1661 1028L1683 1015V1041L1661 1054Z" fill="#6fc0e8" />
		<path d="M1639 1015L1661 1028L1683 1015M1661 1028V1054" fill="none" stroke="#fff" stroke-width="1" />
		<text x="1712" y="1040" class="wm-big" textLength="200" lengthAdjust="spacingAndGlyphs">3D世界网</text>
		<text x="1713" y="1059" class="wm-small" textLength="197" lengthAdjust="spacing">WWW.3DSJW.COM</text>
	</svg>
</div>

<style>
	:global(body) {
		margin: 0;
		background: #d8d8d8;
	}

	.app {
		position: relative;
		width: 1920px;
		height: 1080px;
		overflow: hidden;
		display: flex;
		flex-direction: column;
		font-family: "Liberation Sans", "Noto Sans CJK SC", sans-serif;
		font-size: 12px;
		color: #111;
	}

	i {
		display: block;
		font-style: normal;
	}

	.titlebar {
		height: 22px;
		flex: none;
		display: flex;
		justify-content: space-between;
		background: linear-gradient(#4a4a4a 0, #999 3px, #777 7px, #1a1a1a 8px);
		color: #e8e8e8;
		font-size: 13px;
	}

	.title-left {
		display: flex;
		align-items: center;
		gap: 7px;
		padding-bottom: 1px;
		box-sizing: border-box;
	}

	.title-right {
		display: flex;
		gap: 2px;
		align-items: flex-start;
		padding-top: 2px;
		box-sizing: border-box;
	}

	.siemens {
		color: #fff;
		font-weight: 700;
		font-size: 13px;
		margin-right: 26px;
		margin-top: 3px;
	}

	.winbtn {
		width: 19px;
		height: 18px;
		border-radius: 2px;
		background: linear-gradient(#777, #222);
		color: #fff;
		text-align: center;
		font-size: 11px;
		font-weight: 700;
		line-height: 17px;
	}

	.winbtn.close {
		width: 22px;
		background: linear-gradient(#f08060, #c83a20);
		font-size: 14px;
	}

	.menubar {
		height: 24px;
		flex: none;
		display: flex;
		align-items: center;
		background: linear-gradient(#dfdfdf, #e4e4e4);
		border-top: 1px solid #fff;
		box-sizing: border-box;
		padding: 0 0 3px 4px;
		font-family: "Noto Sans CJK SC", sans-serif;
	}

	.menu-logo {
		margin-right: 3px;
	}

	.menu {
		margin-right: 10px;
		white-space: nowrap;
	}

	.menu.gc {
		margin-right: 17px;
	}

	.menu em {
		font-style: normal;
		font-size: 10px;
		font-family: "Liberation Mono", monospace;
	}

	.docbtns {
		margin-left: auto;
		display: flex;
		gap: 1px;
		margin-right: 3px;
	}

	.docbtns span {
		width: 17px;
		height: 17px;
		border: 1px solid #9a9a9a;
		border-radius: 3px;
		background: linear-gradient(#f4f4f4, #bbb);
		box-sizing: border-box;
		text-align: center;
		font-size: 10px;
		line-height: 14px;
		font-weight: 700;
		color: #444;
		font-family: "Liberation Sans", sans-serif;
	}

	.bar {
		height: 26px;
		flex: none;
		display: flex;
		align-items: stretch;
		background: linear-gradient(#dcdcdc, #d2d2d2);
		border-top: 1px solid #bdbdbd;
		box-sizing: border-box;
	}

	.toolbar {
		display: flex;
		align-items: center;
		background: linear-gradient(#e6e6e6, #dadada);
		border-right: 1px solid #f0f0f0;
		padding: 0 3px;
	}

	.toolbar.joined {
		padding: 0;
	}

	.g1 {
		margin-left: 1px;
	}

	.g1 .caret {
		margin: 2px 2.5px 0;
	}

	.g2 {
		margin-left: 3px;
	}

	.g2 .sep {
		margin: 0 2.5px;
	}

	.r2b {
		margin-left: 242px;
	}

	.r3b {
		margin-left: 427px;
	}

	.r3a .slot.on {
		margin: 0 3px 0 -2px;
	}

	.slot {
		width: 23px;
		height: 23px;
		flex: none;
		display: flex;
		align-items: center;
		justify-content: center;
	}

	.slot.on {
		background: #fff;
		border: 1px solid #777;
		border-radius: 3px;
		box-sizing: border-box;
	}

	.ico {
		display: block;
		flex: none;
	}

	.sep {
		width: 1px;
		height: 22px;
		background: #f6f6f6;
		border-left: 1px solid #bbb;
		margin: 0 2px;
		flex: none;
	}

	.grip {
		width: 2px;
		height: 18px;
		margin: 0 3px 0 2px;
		flex: none;
		background: repeating-linear-gradient(#999 0 2px, transparent 2px 4px);
	}

	.caret {
		width: 0;
		height: 0;
		border: 3.5px solid transparent;
		border-top: 4px solid #111;
		border-bottom: 0;
		margin: 2px 2px 0;
		flex: none;
	}

	.tbtext {
		font-family: "Noto Sans CJK SC", sans-serif;
		font-size: 12px;
		white-space: nowrap;
		margin: 0 1px;
		flex: none;
	}

	.selbar {
		height: 28px;
		flex: none;
		display: flex;
		align-items: center;
		background: linear-gradient(#c2c2c2, #e4e4e4);
		border-top: 1px solid #aaa;
		border-bottom: 1px solid #f0f0f0;
		box-sizing: border-box;
		padding-left: 6px;
	}

	.combo {
		height: 17px;
		background: #fff;
		border: 1px solid #444;
		border-radius: 2px;
		display: flex;
		justify-content: space-between;
		align-items: center;
		box-sizing: border-box;
		font-family: "Noto Sans CJK SC", sans-serif;
		font-size: 12px;
		line-height: 14px;
		padding-left: 2px;
		flex: none;
	}

	.c-a {
		width: 109px;
		margin-right: 10px;
	}

	.c-b {
		width: 113px;
		margin-right: 6px;
	}

	.combo b {
		width: 16px;
		height: 15px;
		background: linear-gradient(#cfe2f8, #6e9fdc);
		position: relative;
	}

	.combo b::after {
		content: "";
		position: absolute;
		left: 3px;
		top: 4px;
		border: 5px solid transparent;
		border-top: 7px solid #111;
		border-bottom: 0;
	}

	.caret.end {
		margin-left: auto;
		margin-right: 1px;
		margin-top: 10px;
	}

	.status {
		height: 21px;
		flex: none;
		display: flex;
		align-items: center;
		background: #dcdcdc;
		border-bottom: 1px solid #999;
		box-sizing: border-box;
		padding-left: 3px;
		font-family: "Noto Sans CJK SC", sans-serif;
	}

	.status strong {
		font-size: 13px;
		white-space: nowrap;
	}

	.status .mono {
		font-family: "Liberation Mono", monospace;
		font-size: 12px;
	}

	.st-div {
		width: 1px;
		height: 100%;
		background: #bdbdbd;
		margin-left: 670px;
	}

	.status-right {
		display: flex;
		align-items: center;
		height: 100%;
		margin-left: auto;
	}

	.status-right i {
		width: 19px;
		height: 100%;
		border-left: 1px solid #bdbdbd;
	}

	.st-ico {
		width: 19px;
		height: 19px;
		display: flex;
		align-items: center;
		justify-content: center;
		overflow: hidden;
	}

	.st-ico.dark {
		background: #7c8d98;
	}

	.body {
		flex: 1;
		display: flex;
		min-height: 0;
	}

	.left {
		width: 152px;
		flex: none;
		display: flex;
		align-items: flex-start;
		background: linear-gradient(#bdbdbf, #d8d8da);
	}

	.col {
		width: 38px;
		flex: none;
		box-sizing: border-box;
		background: #dedede;
		border-right: 1px solid #b5b5b5;
		border-bottom: 1px solid #b5b5b5;
		border-left: 1px solid #f2f2f2;
		display: flex;
		flex-direction: column;
	}

	.c4 {
		align-self: stretch;
	}

	.vgrip {
		height: 8.5px;
		flex: none;
		background: radial-gradient(circle, #999 1px, transparent 1.2px) 3px 3px / 4px 8px repeat-x;
		margin: 0 4px;
	}

	.cell {
		height: 23px;
		flex: none;
		display: flex;
		align-items: center;
		justify-content: center;
	}

	.cell.drop {
		justify-content: flex-start;
		padding-left: 3px;
	}

	.cell.drop .caret {
		margin-left: 4px;
	}

	.hsep {
		height: 2px;
		margin: 2px 2px;
		background: #bbb;
		border-bottom: 1px solid #f8f8f8;
		box-sizing: border-box;
		flex: none;
	}

	.foot {
		height: 12px;
		display: flex;
		align-items: center;
		padding-left: 5px;
		flex: none;
	}

	.foot u {
		display: block;
		width: 0;
		height: 0;
		border: 3.5px solid transparent;
		border-right: 4px solid #111;
		border-left: 0;
	}

	.foot.bottom {
		margin-top: auto;
		height: 20px;
		justify-content: space-between;
		padding-right: 4px;
		font-size: 11px;
		font-weight: 700;
	}

	.foot.bottom span {
		transform: rotate(90deg);
		line-height: 1;
	}

	.view {
		flex: 1;
		position: relative;
		background: linear-gradient(#b9babc, #e9eaec);
		overflow: hidden;
	}

	.scene {
		display: block;
	}

	.axis {
		font-size: 11px;
		font-family: "Liberation Sans", sans-serif;
	}

	.axis.small {
		font-size: 9px;
	}

	.rail {
		width: 35px;
		flex: none;
		box-sizing: border-box;
		background: #a9a9a9;
		border-left: 7px solid #eaeaea;
		padding-top: 17px;
		display: flex;
		flex-direction: column;
		gap: 15px;
	}

	.railgroup {
		display: flex;
		flex-direction: column;
		gap: 3px;
	}

	.tab {
		width: 21px;
		height: 31px;
		box-sizing: border-box;
		background: #d8d8d8;
		border: 1px solid #8a8a8a;
		border-left: 0;
		border-radius: 0 4px 4px 0;
		display: flex;
		align-items: center;
		justify-content: center;
		overflow: hidden;
	}

	.taskbar {
		height: 30px;
		flex: none;
		display: flex;
		align-items: center;
		background: linear-gradient(#98a6ba, #7d8ea8 30%, #7a8ba5);
		border-top: 1px solid #3a4a60;
		box-sizing: border-box;
		font-family: "Noto Sans CJK SC", "Liberation Sans", sans-serif;
		color: #eef2f8;
	}

	.orb {
		position: relative;
		width: 34px;
		height: 34px;
		margin: 0 13px 0 10px;
		border-radius: 50%;
		background: radial-gradient(circle at 50% 30%, #6fb4e8, #12558c 70%);
		box-shadow: inset 0 0 2px #cfe6f8;
		flex: none;
		display: grid;
		grid-template-columns: 8px 8px;
		grid-template-rows: 7px 7px;
		gap: 1px;
		place-content: center;
	}

	.orb i {
		border-radius: 1px;
	}

	.orb .r { background: #e8502a; }
	.orb .g { background: #7ab82a; }
	.orb .b { background: #3a9ae0; }
	.orb .y { background: #f4c020; }

	.quick {
		width: 23px;
		display: flex;
		justify-content: center;
		flex: none;
	}

	.taskgroup {
		display: flex;
		margin-left: 45px;
		height: 28px;
		border: 1px solid #3d4c63;
		border-radius: 3px;
		box-sizing: border-box;
		background: linear-gradient(#b4becd, #8494ad);
	}

	.task {
		width: 159px;
		height: 100%;
		display: flex;
		align-items: center;
		gap: 4px;
		padding-left: 8px;
		box-sizing: border-box;
		white-space: nowrap;
		overflow: hidden;
		border-right: 1px solid #6f7f98;
		font-size: 12px;
	}

	.task .ico {
		width: 16px;
		height: 16px;
	}

	.task:last-child {
		border-right: 0;
	}

	.task.active {
		width: 158px;
		height: 28px;
		margin-left: 4px;
		border: 1px solid #3d4c63;
		border-radius: 3px;
		background: linear-gradient(#dfe4ec, #aab5c6);
		color: #fff;
		flex: none;
	}

	.tray {
		margin-left: auto;
		display: flex;
		align-items: center;
		height: 100%;
	}

	.tray-ico {
		width: 24px;
		display: flex;
		justify-content: center;
		flex: none;
	}

	.tray-ico:first-child {
		margin-right: 5px;
	}

	.tray-ico .ico {
		width: 17px;
		height: 17px;
	}

	.clock {
		width: 58px;
		text-align: center;
		font-family: "Liberation Sans", sans-serif;
		font-size: 12px;
		margin-left: 4px;
	}

	.showdesk {
		width: 14px;
		height: 100%;
		background: linear-gradient(#8898ae, #5d6d85);
		border-left: 1px solid #3d4c63;
		box-sizing: border-box;
	}

	.watermark {
		position: absolute;
		right: 0;
		bottom: 0;
		pointer-events: none;
	}

	.wm-big {
		font-family: "Noto Sans CJK SC", sans-serif;
		font-size: 50px;
		font-weight: 700;
		fill: #7cc4ea;
		stroke: #fff;
		stroke-width: 3px;
		paint-order: stroke;
	}

	.wm-small {
		font-family: "Liberation Sans", sans-serif;
		font-size: 16px;
		font-weight: 700;
		fill: #7cc4ea;
		stroke: #fff;
		stroke-width: 2.5px;
		paint-order: stroke;
	}
</style>
